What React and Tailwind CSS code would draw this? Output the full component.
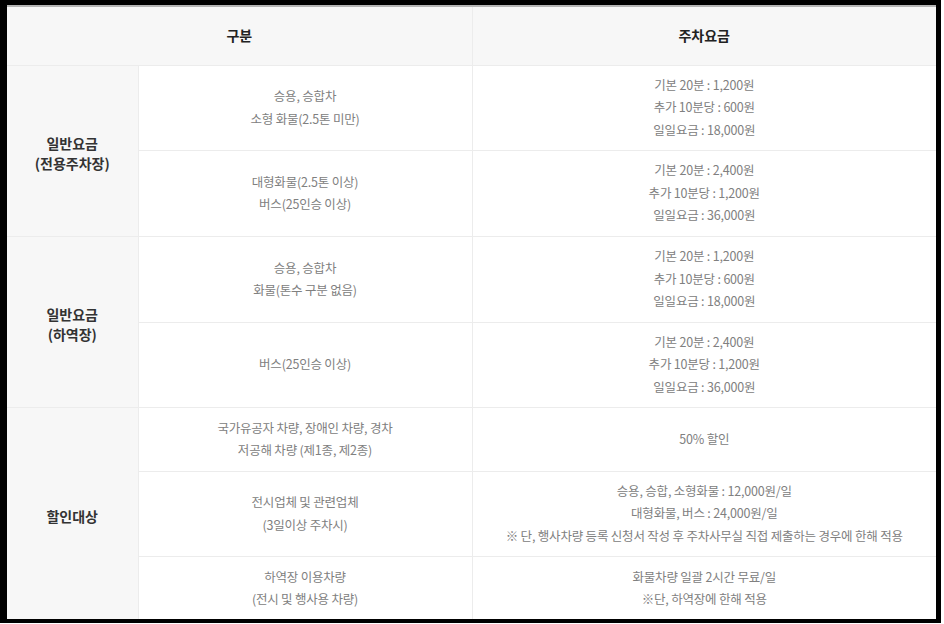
import React from "react";

const rows = [
  {
    cat: ["일반요금", "(전용주차장)"],
    catSpan: 2,
    h: "h-[85px]",
    mid: ["승용, 승합차", "소형 화물(2.5톤 미만)"],
    fee: ["기본 20분 : 1,200원", "추가 10분당 : 600원", "일일요금 : 18,000원"],
  },
  {
    h: "h-[86px]",
    mid: ["대형화물(2.5톤 이상)", "버스(25인승 이상)"],
    fee: ["기본 20분 : 2,400원", "추가 10분당 : 1,200원", "일일요금 : 36,000원"],
  },
  {
    cat: ["일반요금", "(하역장)"],
    catSpan: 2,
    h: "h-[86px]",
    mid: ["승용, 승합차", "화물(톤수 구분 없음)"],
    fee: ["기본 20분 : 1,200원", "추가 10분당 : 600원", "일일요금 : 18,000원"],
  },
  {
    h: "h-[85px]",
    mid: ["버스(25인승 이상)"],
    fee: ["기본 20분 : 2,400원", "추가 10분당 : 1,200원", "일일요금 : 36,000원"],
  },
  {
    cat: ["할인대상"],
    catSpan: 3,
    h: "h-[64px]",
    mid: ["국가유공자 차량, 장애인 차량, 경차", "저공해 차량 (제1종, 제2종)"],
    fee: ["50% 할인"],
  },
  {
    h: "h-[85px]",
    mid: ["전시업체 및 관련업체", "(3일이상 주차시)"],
    fee: [
      "승용, 승합, 소형화물 : 12,000원/일",
      "대형화물, 버스 : 24,000원/일",
      "※ 단, 행사차량 등록 신청서 작성 후 주차사무실 직접 제출하는 경우에 한해 적용",
    ],
  },
  {
    h: "h-[64px]",
    mid: ["하역장 이용차량", "(전시 및 행사용 차량)"],
    fee: ["화물차량 일괄 2시간 무료/일", "※단, 하역장에 한해 적용"],
  },
];

export default function App() {
  return (
    <div className="bg-white w-[944px] h-[624px]">
      <div className="w-[941px] h-[623px] bg-black pl-[7px] pt-[5px] pr-[5px] pb-[4px]">
        <div
          className="w-full h-full bg-white overflow-hidden border-t-2 border-[#b5b5b5]"
          style={{ fontFamily: '"Noto Sans CJK KR", "Noto Sans", sans-serif' }}
        >
          <table className="w-full table-fixed border-collapse">
            <colgroup>
              <col className="w-[131px]" />
              <col className="w-[334px]" />
              <col />
            </colgroup>
            <thead>
              <tr className="h-[58px] bg-[#f7f7f7] border-b border-[#ececec]">
                <th
                  colSpan={2}
                  className="text-[14px] font-bold text-[#222] text-center align-middle border-r border-[#ececec]"
                >
                  구분
                </th>
                <th className="text-[14px] font-bold text-[#222] text-center align-middle">
                  주차요금
                </th>
              </tr>
            </thead>
            <tbody>
              {rows.map((r, i) => (
                <tr key={i} className={`${r.h} border-b border-[#ececec]`}>
                  {r.cat && (
                    <td
                      rowSpan={r.catSpan}
                      className="bg-[#f7f7f7] text-center align-middle pt-[5px] text-[14px] font-bold text-[#333] leading-[20px] border-r border-[#ececec]"
                    >
                      {r.cat.map((c, j) => (
                        <div key={j}>{c}</div>
                      ))}
                    </td>
                  )}
                  <td className="text-center align-middle text-[12.5px] tracking-[-0.2px] text-[#808080] leading-[22.5px] border-r border-[#ececec]">
                    {r.mid.map((c, j) => (
                      <div key={j}>{c}</div>
                    ))}
                  </td>
                  <td className="text-center align-middle text-[12.5px] tracking-[-0.2px] text-[#808080] leading-[22.5px]">
                    {r.fee.map((c, j) => (
                      <div key={j}>{c}</div>
                    ))}
                  </td>
                </tr>
              ))}
            </tbody>
          </table>
        </div>
      </div>
    </div>
  );
}
